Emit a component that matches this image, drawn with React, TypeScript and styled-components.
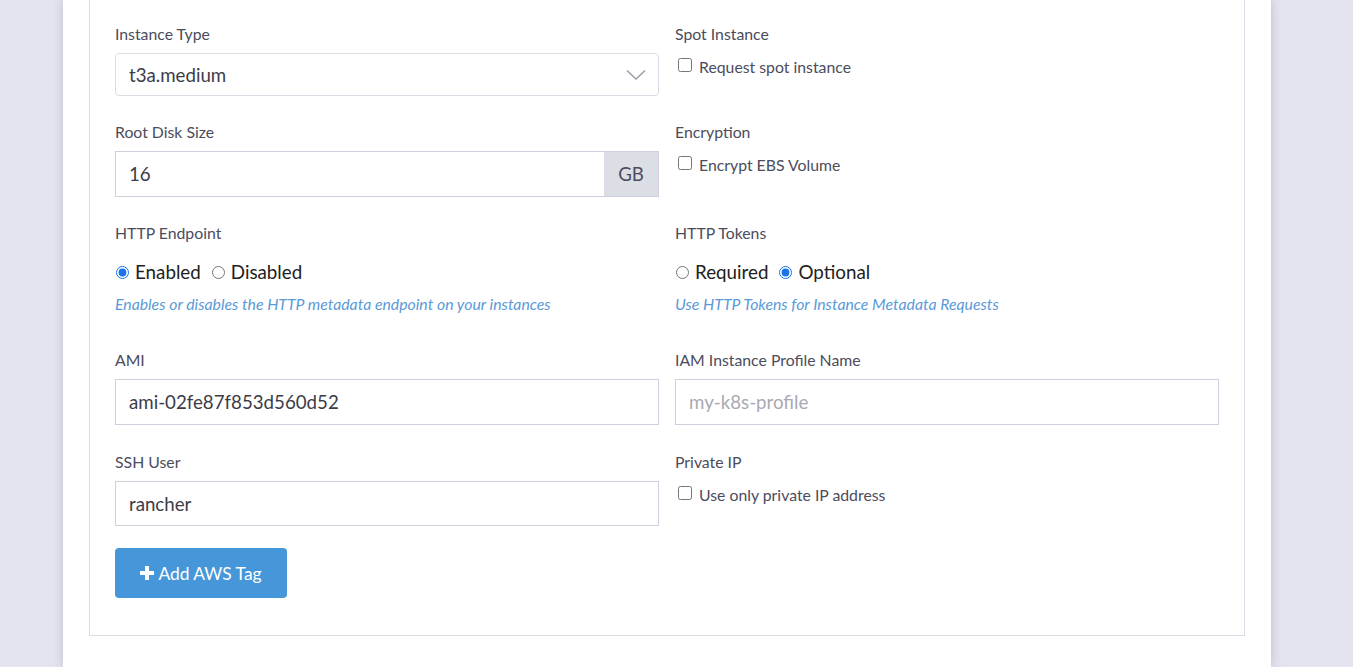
import React from "react";
import styled, { createGlobalStyle } from "styled-components";

const Global = createGlobalStyle`
  html, body { margin: 0; padding: 0; }
  body {
    background: #e4e4ee;
    font-family: Lato, "Open Sans", "Liberation Sans", sans-serif;
    overflow: hidden;
  }
  * { box-sizing: border-box; }
`;

const Page = styled.div`
  height: 667px;
  padding-left: 63px;
`;

const Card = styled.div`
  width: 1208px;
  height: 100%;
  background: #fff;
  box-shadow: 0 0 10px rgba(60, 60, 90, 0.22);
  padding: 0 26px;
`;

const Box = styled.div`
  border: 1px solid #dcdce6;
  border-top: none;
  padding: 23px 25px 37px;
`;

const Grid = styled.div`
  display: grid;
  grid-template-columns: 544px 544px;
  column-gap: 16px;
`;

const Field = styled.div<{ $mb?: number }>`
  display: flex;
  flex-direction: column;
  margin-bottom: ${(p) => p.$mb ?? 25}px;
`;

const Label = styled.div`
  font-size: 15.8px;
  line-height: 21px;
  color: #4c4c5c;
  margin-bottom: 9px;
`;

const InputBox = styled.input<{ $h?: number }>`
  height: ${(p) => p.$h ?? 46}px;
  width: 100%;
  border: 1px solid #cfd0dc;
  border-radius: 0;
  padding: 0 13px;
  font-family: inherit;
  font-size: 18.7px;
  color: #3c3c48;
  background: #fff;
  outline: none;
  &::placeholder { color: #a9a9b3; }
`;

const SelectWrap = styled.div`
  position: relative;
  height: 43px;
  border: 1px solid #dcdce6;
  border-radius: 4px;
  display: flex;
  align-items: center;
  padding: 0 13px;
  font-size: 18.7px;
  color: #3c3c48;
`;

const Chevron = styled.svg`
  position: absolute;
  right: 12px;
  top: 15px;
`;

const Group = styled.div`
  display: flex;
  height: 46px;
`;

const GroupInput = styled(InputBox)`
  flex: 1;
  border-right: none;
`;

const Addon = styled.div`
  width: 55px;
  background: #dcdee6;
  border: 1px solid #cfd0dc;
  border-left: none;
  display: flex;
  align-items: center;
  justify-content: center;
  font-size: 18.7px;
  color: #4c4c5c;
`;

const CheckLine = styled.label`
  display: flex;
  align-items: center;
  font-size: 15.8px;
  color: #4c4c5c;
  margin-top: 3px;
  line-height: 21px;
`;

const Check = styled.input`
  width: 14px;
  height: 14px;
  margin: 0 7px 0 3px;
  position: relative;
  top: -2px;
`;

const RadioRow = styled.div`
  display: flex;
  align-items: center;
  font-size: 18.8px;
  line-height: 24px;
  color: #222;
  margin-top: 8px;
`;

const RadioLabel = styled.label`
  display: flex;
  align-items: center;
  margin-right: 10px;
`;

const Radio = styled.input`
  width: 13px;
  height: 13px;
  margin: 0 6px 0 1px;
  accent-color: #1a73e8;
`;

const Help = styled.div`
  font-size: 15.8px;
  font-style: italic;
  color: #5b9ad8;
  line-height: 21px;
  margin-top: 9px;
`;

const Button = styled.button`
  width: 172px;
  height: 50px;
  background: #4697da;
  border: none;
  border-radius: 4px;
  color: #fff;
  font-family: inherit;
  font-size: 17.4px;
  display: flex;
  align-items: center;
  justify-content: center;
  gap: 4px;
  padding: 0;
`;

export default function App() {
  return (
    <>
      <Global />
      <Page>
        <Card>
          <Box>
            <Grid>
              <Field>
                <Label>Instance Type</Label>
                <SelectWrap>
                  t3a.medium
                  <Chevron width="20" height="12" viewBox="0 0 20 12">
                    <path d="M1 1.5 L10 10 L19 1.5" fill="none" stroke="#9a9aa6" strokeWidth="1.4" />
                  </Chevron>
                </SelectWrap>
              </Field>
              <Field>
                <Label>Spot Instance</Label>
                <CheckLine>
                  <Check type="checkbox" />
                  Request spot instance
                </CheckLine>
              </Field>

              <Field>
                <Label>Root Disk Size</Label>
                <Group>
                  <GroupInput defaultValue="16" />
                  <Addon>GB</Addon>
                </Group>
              </Field>
              <Field>
                <Label>Encryption</Label>
                <CheckLine>
                  <Check type="checkbox" />
                  Encrypt EBS Volume
                </CheckLine>
              </Field>

              <Field $mb={35}>
                <Label>HTTP Endpoint</Label>
                <RadioRow>
                  <RadioLabel>
                    <Radio type="radio" name="ep" defaultChecked />
                    Enabled
                  </RadioLabel>
                  <RadioLabel>
                    <Radio type="radio" name="ep" />
                    Disabled
                  </RadioLabel>
                </RadioRow>
                <Help>Enables or disables the HTTP metadata endpoint on your instances</Help>
              </Field>
              <Field $mb={35}>
                <Label>HTTP Tokens</Label>
                <RadioRow>
                  <RadioLabel>
                    <Radio type="radio" name="tk" />
                    Required
                  </RadioLabel>
                  <RadioLabel>
                    <Radio type="radio" name="tk" defaultChecked />
                    Optional
                  </RadioLabel>
                </RadioRow>
                <Help>Use HTTP Tokens for Instance Metadata Requests</Help>
              </Field>

              <Field $mb={26}>
                <Label>AMI</Label>
                <InputBox defaultValue="ami-02fe87f853d560d52" />
              </Field>
              <Field $mb={26}>
                <Label>IAM Instance Profile Name</Label>
                <InputBox placeholder="my-k8s-profile" />
              </Field>

              <Field $mb={22}>
                <Label>SSH User</Label>
                <InputBox $h={45} defaultValue="rancher" />
              </Field>
              <Field $mb={22}>
                <Label>Private IP</Label>
                <CheckLine>
                  <Check type="checkbox" />
                  Use only private IP address
                </CheckLine>
              </Field>
            </Grid>
            <Button>
              <svg width="14" height="14" viewBox="0 0 14 14">
                <path d="M5 0h4v5h5v4H9v5H5V9H0V5h5z" fill="#fff" />
              </svg>
              Add AWS Tag
            </Button>
          </Box>
        </Card>
      </Page>
    </>
  );
}
